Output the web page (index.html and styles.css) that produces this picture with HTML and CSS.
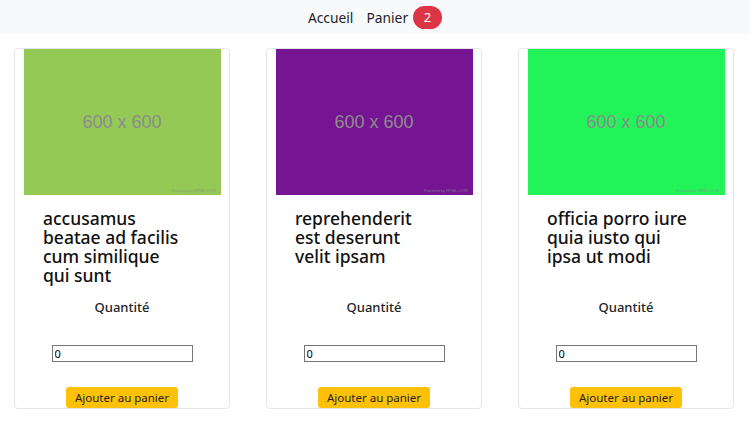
FILE: index.html
```html
<!DOCTYPE html>
<html lang="fr">
<head>
<meta charset="utf-8">
<title>Boutique</title>
<link rel="stylesheet" href="styles.css">
</head>
<body>
<nav class="nav">
  <a class="nav-link" href="#">Accueil</a>
  <a class="nav-link" href="#">Panier</a>
  <span class="badge">2</span>
</nav>
<main class="cards">
  <div class="card">
    <div class="thumb thumb-lime"><span class="thumb-label">600 x 600</span><span class="thumb-credit">Powered by HTML.COM</span></div>
    <h5 class="title">accusamus beatae ad facilis cum similique qui sunt</h5>
    <label class="qty-label">Quantité</label>
    <input class="qty" type="text" value="0">
    <button class="add">Ajouter au panier</button>
  </div>
  <div class="card">
    <div class="thumb thumb-purple"><span class="thumb-label">600 x 600</span><span class="thumb-credit">Powered by HTML.COM</span></div>
    <h5 class="title">reprehenderit est deserunt velit ipsam</h5>
    <label class="qty-label">Quantité</label>
    <input class="qty" type="text" value="0">
    <button class="add">Ajouter au panier</button>
  </div>
  <div class="card">
    <div class="thumb thumb-green"><span class="thumb-label">600 x 600</span><span class="thumb-credit">Powered by HTML.COM</span></div>
    <h5 class="title">officia porro iure quia iusto qui ipsa ut modi</h5>
    <label class="qty-label">Quantité</label>
    <input class="qty" type="text" value="0">
    <button class="add">Ajouter au panier</button>
  </div>
</main>
</body>
</html>
```

FILE: styles.css
```css
* { box-sizing: border-box; }
body {
  margin: 0;
  font-family: "Noto Sans", "Open Sans", sans-serif;
  color: #212529;
  background: #fff;
}
.nav {
  height: 34px;
  background: #f8f9fa;
  display: flex;
  align-items: center;
  justify-content: center;
  gap: 13px;
}
.nav-link {
  color: #212529;
  text-decoration: none;
  font-size: 13.8px;
}
.badge {
  margin-left: -8px;
  width: 29px;
  height: 23px;
  border-radius: 12px;
  background: #dc3545;
  color: #fff;
  font-size: 13px;
  display: flex;
  align-items: center;
  justify-content: center;
}
.cards {
  display: flex;
  gap: 36px;
  padding: 14px 0 0 14px;
}
.card {
  width: 216px;
  height: 361px;
  border: 1px solid #e3e5e8;
  border-radius: 4px;
  padding: 0 9px;
  display: flex;
  flex-direction: column;
  align-items: center;
}
.thumb {
  position: relative;
  width: 197px;
  height: 146px;
  flex: none;
  display: flex;
  align-items: center;
  justify-content: center;
}
.thumb-lime { background: #93c954; }
.thumb-purple { background: #761593; }
.thumb-green { background: #22f359; }
.thumb-label {
  font-family: "Liberation Sans", Arial, sans-serif;
  font-size: 18px;
  color: #8c8c8c;
}
.thumb-credit {
  position: absolute;
  right: 5px;
  bottom: 2px;
  font-family: "Liberation Sans", Arial, sans-serif;
  font-size: 4px;
  color: #8c8c8c;
  opacity: 0.7;
}
.title {
  align-self: stretch;
  margin: 14px 0 0;
  padding: 0 35px 0 19px;
  height: 76px;
  font-size: 17.5px;
  line-height: 19px;
  font-weight: 500;
  color: #111;
}
.qty-label {
  margin-top: 13px;
  font-size: 13px;
  font-weight: 500;
  line-height: 18px;
}
.qty {
  margin-top: 29px;
  width: 141px;
  height: 17px;
  border: 1px solid #767676;
  padding: 0 2px;
  font-family: "Noto Sans", sans-serif;
  font-size: 11px;
  color: #000;
}
.add {
  margin-top: auto;
  width: 112px;
  height: 21px;
  border: none;
  border-radius: 3px;
  background: #ffc107;
  color: #212529;
  font-family: "Noto Sans", sans-serif;
  font-size: 11.5px;
  padding: 0;
}
```
